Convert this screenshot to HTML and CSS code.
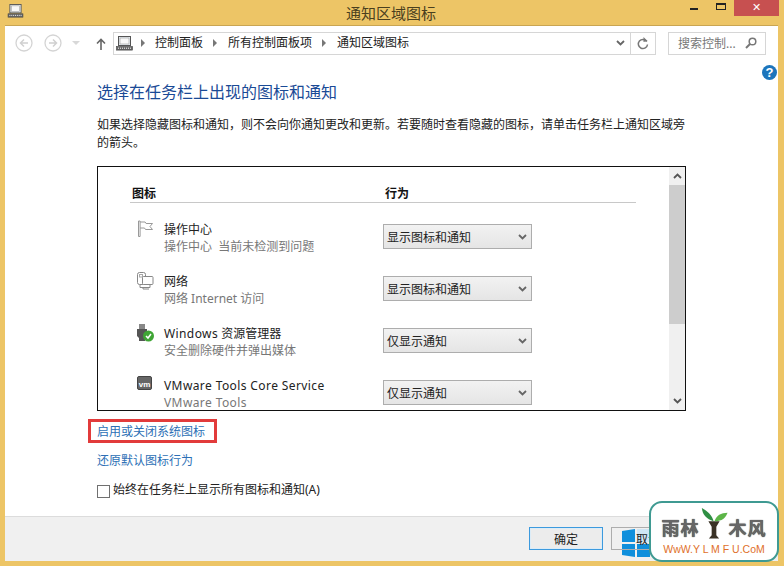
FILE: index.html
```html
<!DOCTYPE html>
<html lang="zh-CN">
<head>
<meta charset="utf-8">
<title>通知区域图标</title>
<link rel="stylesheet" href="styles.css">
</head>
<body>
<svg class="defs" width="0" height="0" aria-hidden="true">
  <symbol id="computer" viewBox="0 0 17 15">
    <rect x="2.5" y="0.5" width="12" height="9" fill="#e8eef2" stroke="#555"/>
    <rect x="4" y="2" width="9" height="6" fill="#f8f8f8" stroke="#999" stroke-width=".6"/>
    <rect x="0.5" y="10.5" width="16" height="3.6" fill="#666" stroke="#444" stroke-width=".6"/>
    <path d="M2 12.2h1M4 12.2h1M6 12.2h1M8 12.2h1M10 12.2h1M12 12.2h1M14 12.2h1" stroke="#fff"/>
  </symbol>
  <symbol id="chev" viewBox="0 0 9 6">
    <path d="M1 1l3.5 3.5L8 1" fill="none" stroke="#666" stroke-width="1.8"/>
  </symbol>
</svg>
<div class="window">
  <header class="titlebar">
    <svg class="title-icon"><use href="#computer"/></svg>
    <h1 class="title">通知区域图标</h1>
    <div class="controls">
      <span class="min"></span>
      <span class="max"></span>
      <span class="close">✕</span>
    </div>
  </header>
  <main class="client">
    <nav class="toolbar">
      <svg class="nav-btn" viewBox="0 0 18 18"><circle cx="9" cy="9" r="8" fill="none" stroke="#d4d4d4" stroke-width="1.3"/><path d="M13 9H6M9 5.5L5.5 9 9 12.5" fill="none" stroke="#d0d0d0" stroke-width="1.5"/></svg>
      <svg class="nav-btn" viewBox="0 0 18 18"><circle cx="9" cy="9" r="8" fill="none" stroke="#d4d4d4" stroke-width="1.3"/><path d="M5 9h7M9 5.5L12.5 9 9 12.5" fill="none" stroke="#d0d0d0" stroke-width="1.5"/></svg>
      <svg class="nav-drop" viewBox="0 0 8 4"><path d="M0 0h8L4 4z" fill="#d8d8d8"/></svg>
      <svg class="nav-up" viewBox="0 0 10 12"><path d="M5 12V1.5M1 5.5l4-4 4 4" fill="none" stroke="#666" stroke-width="1.6"/></svg>
      <div class="address">
        <svg class="addr-icon"><use href="#computer"/></svg>
        <span class="sep"></span><span class="crumb">控制面板</span>
        <span class="sep"></span><span class="crumb">所有控制面板项</span>
        <span class="sep"></span><span class="crumb">通知区域图标</span>
        <svg class="addr-chev"><use href="#chev"/></svg>
        <span class="refresh">
          <svg viewBox="0 0 12 13" width="12" height="13"><path d="M9.8 4.5A4.6 4.6 0 1 0 10.5 7.5" fill="none" stroke="#777" stroke-width="1.5"/><path d="M6.5 0v5l4-1z" fill="#777"/></svg>
        </span>
      </div>
      <div class="search">
        <span>搜索控制...</span>
        <svg viewBox="0 0 12 12" width="12" height="12"><circle cx="7.5" cy="4.5" r="3.3" fill="none" stroke="#777" stroke-width="1.5"/><path d="M5 7l-4 4" stroke="#777" stroke-width="2"/></svg>
      </div>
    </nav>
    <svg class="help" viewBox="0 0 15 15"><circle cx="7.5" cy="7.5" r="7.5" fill="#1c75bc"/><text x="7.5" y="12" text-anchor="middle" class="help-mark">?</text></svg>
    <section class="content">
      <h2 class="heading">选择在任务栏上出现的图标和通知</h2>
      <p class="desc">如果选择隐藏图标和通知，则不会向你通知更改和更新。若要随时查看隐藏的图标，请单击任务栏上通知区域旁的箭头。</p>
      <div class="listbox">
        <div class="list-inner">
          <div class="list-head"><span class="col-a">图标</span><span>行为</span></div>
          <div class="row">
            <svg class="row-icon" viewBox="0 0 18 18"><path d="M1.500 16.500V1h1.600v15.500zM3.100 2h5l1 1.500h6.400l-2.500 3 2.500 3h-7l-1-1.500h-4.400" fill="#fff" stroke="#999"/></svg>
            <div class="row-text"><div class="name">操作中心</div><div class="sub">操作中心&nbsp; 当前未检测到问题</div></div>
            <div class="select"><span>显示图标和通知</span><svg class="sel-chev"><use href="#chev"/></svg></div>
          </div>
          <div class="row">
            <svg class="row-icon" viewBox="0 0 18 18"><rect x="0.500" y="0.500" width="8" height="12" rx="2" fill="#fff" stroke="#888"/><rect x="2.500" y="2.500" width="3" height="2.500" fill="#fff" stroke="#aaa"/><rect x="5.500" y="4.500" width="10.500" height="8" rx="1" fill="#fff" stroke="#888"/><path d="M3 12.500v3h10v-3M6 15.500v1.500h6" fill="none" stroke="#888"/></svg>
            <div class="row-text"><div class="name">网络</div><div class="sub">网络 Internet 访问</div></div>
            <div class="select"><span>显示图标和通知</span><svg class="sel-chev"><use href="#chev"/></svg></div>
          </div>
          <div class="row">
            <svg class="row-icon" viewBox="0 0 18 18"><rect x="2" y="0" width="6" height="5" fill="#888"/><path d="M0 5h10v7l-2 2v3H2v-3l-2-2z" fill="#555"/><circle cx="11.500" cy="12" r="5.500" fill="#3fa535"/><path d="M9 12l2 2 3-4" fill="none" stroke="#fff" stroke-width="1.500"/></svg>
            <div class="row-text"><div class="name"><span class="latin">Windows</span> 资源管理器</div><div class="sub">安全删除硬件并弹出媒体</div></div>
            <div class="select"><span>仅显示通知</span><svg class="sel-chev"><use href="#chev"/></svg></div>
          </div>
          <div class="row">
            <svg class="row-icon" viewBox="0 0 18 18"><rect x="0.500" y="0.500" width="14" height="13" rx="1.500" fill="#666" stroke="#444"/><text x="7.500" y="10.500" text-anchor="middle" class="vm-mark">vm</text></svg>
            <div class="row-text"><div class="name"><span class="latin">VMware Tools Core Service</span></div><div class="sub"><span class="latin">VMware Tools</span></div></div>
            <div class="select"><span>仅显示通知</span><svg class="sel-chev"><use href="#chev"/></svg></div>
          </div>
        </div>
        <div class="scrollbar">
          <svg class="sb-arrow" viewBox="0 0 9 6"><path d="M1 5l3.500-3.500L8 5" fill="none" stroke="#555" stroke-width="1.800"/></svg>
          <div class="sb-thumb"></div>
          <div class="sb-track"></div>
          <svg class="sb-arrow" viewBox="0 0 9 6"><path d="M1 1l3.500 3.500L8 1" fill="none" stroke="#555" stroke-width="1.800"/></svg>
        </div>
      </div>
      <div class="link-wrap"><a class="link">启用或关闭系统图标</a><span class="highlight"></span></div>
      <a class="link link-second">还原默认图标行为</a>
      <label class="check"><span class="box"></span>始终在任务栏上显示所有图标和通知(A)</label>
    </section>
    <footer class="footer">
      <button class="btn btn-default">确定</button>
      <button class="btn btn-over">取消</button>
    </footer>
  </main>
  <svg class="winlogo" viewBox="0 0 28 28"><path d="M0 2l13-2v13H0zM0 15h13v13l-13-2z" fill="#0f8fdc"/><path d="M15 0h13v13H15z" fill="#cfe6f5"/><path d="M15 15h13v13H15z" fill="#0f8fdc"/></svg>
  <aside class="badge">
    <div class="badge-top">
      <span class="badge-cn">雨林</span>
      <svg class="badge-tree" viewBox="0 0 30 33"><path d="M9 14h12l-3.500 6v9l3 3.500H9.500l3-3.500v-9z" fill="#3a3226"/><path d="M14.500 14C13 8 8 3 2 0c.5 7 5 12 12.500 14z" fill="#2f8f43"/><path d="M15.500 14c2-6 7-9 14-9-2 6-7 9.500-14 9z" fill="#5cb548"/></svg>
      <span class="badge-cn">木风</span>
    </div>
    <div class="badge-url">WwW.Y L M F U.CoM</div>
  </aside>
</div>
</body>
</html>
```
FILE: styles.css
```css
* { box-sizing: border-box; }
html, body { margin: 0; padding: 0; }
body {
  width: 784px;
  height: 566px;
  overflow: hidden;
  font-family: "Noto Sans", "Noto Sans CJK SC", sans-serif;
  font-size: 12px;
  color: #222;
}
.defs { position: absolute; }
.window {
  position: relative;
  width: 784px;
  height: 566px;
  background: #edc566;
  padding: 0 6px 5px 5px;
  display: flex;
  flex-direction: column;
}
.titlebar {
  position: relative;
  height: 25px;
  flex: none;
  display: flex;
  align-items: center;
  justify-content: center;
}
.title-icon {
  position: absolute;
  left: 2px;
  top: 4px;
  width: 17px;
  height: 14px;
}
.title {
  margin: 0 0 0 -1px;
  font-size: 15px;
  font-weight: 400;
  line-height: 20px;
  padding-top: 1px;
  color: #4a3f1e;
}
.controls {
  position: absolute;
  right: -1px;
  top: 0;
  display: flex;
}
.min {
  width: 8px;
  height: 2px;
  background: #222;
  margin: 8px 18px 0 0;
}
.max {
  width: 10px;
  height: 7px;
  border: 1px solid #222;
  border-top-width: 2px;
  margin: 3px 8px 0 0;
}
.close {
  width: 45px;
  height: 16px;
  background: #c75050;
  color: #fff;
  font-size: 11px;
  line-height: 14px;
  text-align: center;
}
.client {
  position: relative;
  flex: 1;
  min-height: 0;
  background: #fff;
  border-top: 1px solid #c9a552;
  display: flex;
  flex-direction: column;
}
.toolbar {
  display: flex;
  align-items: center;
  height: 22px;
  margin-top: 6px;
  padding-left: 10px;
  flex: none;
}
.nav-btn { width: 18px; height: 18px; margin-right: 11px; flex: none; }
.nav-drop { width: 8px; height: 4px; margin-left: -1px; margin-right: 16px; flex: none; }
.nav-up { width: 10px; height: 12px; margin-right: 7px; margin-top: 2px; flex: none; }
.address {
  width: 543px;
  height: 23px;
  border: 1px solid #d6d6d6;
  display: flex;
  align-items: center;
  padding-left: 2px;
  flex: none;
}
.addr-icon { width: 17px; height: 15px; flex: none; }
.sep {
  width: 0;
  height: 0;
  border-left: 4px solid #777;
  border-top: 4px solid transparent;
  border-bottom: 4px solid transparent;
  margin: 0 11px 0 10px;
  flex: none;
}
.addr-icon + .sep { margin: 0 10px 0 8px; }
.crumb { white-space: nowrap; line-height: 20px; color: #222; }
.addr-chev { width: 9px; height: 6px; margin-left: auto; margin-right: 5px; flex: none; }
.refresh {
  width: 25px;
  height: 21px;
  border-left: 1px solid #d6d6d6;
  display: flex;
  align-items: center;
  justify-content: center;
  flex: none;
}
.search {
  width: 98px;
  height: 23px;
  margin-left: 12px;
  border: 1px solid #d6d6d6;
  display: flex;
  align-items: center;
  justify-content: space-between;
  padding: 0 8px 0 9px;
  color: #777;
  flex: none;
}
.help {
  position: absolute;
  right: 1px;
  top: 39px;
  width: 15px;
  height: 15px;
}
.help-mark { font-size: 13px; font-weight: 700; fill: #fff; font-family: "Liberation Sans", sans-serif; }
.content {
  flex: 1;
  min-height: 0;
  padding: 0 0 0 92px;
  display: flex;
  flex-direction: column;
  align-items: flex-start;
}
.heading {
  margin: 27px 0 0;
  font-size: 16px;
  line-height: 22px;
  font-weight: 400;
  color: #1a4a96;
}
.desc {
  margin: 13px 0 0;
  width: 592px;
  line-height: 18px;
  color: #222;
}
.listbox {
  width: 589px;
  height: 245px;
  margin-top: 14px;
  border: 1.500px solid #111;
  display: flex;
  overflow: hidden;
  flex: none;
}
.list-inner {
  flex: 1;
  min-width: 0;
  padding: 17px 33px 0 32px;
  overflow: hidden;
}
.list-head {
  display: flex;
  height: 19px;
  border-bottom: 1px solid #c8c8c8;
  padding: 1px 0 0 2px;
  font-weight: 700;
  line-height: 18px;
  color: #111;
}
.col-a { width: 253px; }
.row {
  display: flex;
  height: 52px;
  padding-top: 21px;
}
.row-icon { width: 18px; height: 18px; margin-left: 7px; margin-top: -4px; flex: none; }
.row-text { width: 219px; margin-left: 9px; margin-top: -3px; flex: none; }
.name { line-height: 17px; color: #222; white-space: nowrap; }
.sub { line-height: 17px; color: #777; white-space: nowrap; }
.latin { letter-spacing: .4px; }
.select {
  width: 149px;
  height: 25px;
  border: 1px solid #adadad;
  background: linear-gradient(#f2f2f2, #e5e5e5);
  display: flex;
  align-items: center;
  justify-content: space-between;
  padding: 0 4px 0 3px;
  color: #222;
  flex: none;
}
.sel-chev { width: 9px; height: 6px; flex: none; }
.scrollbar {
  width: 16px;
  background: #f0f0f0;
  display: flex;
  flex-direction: column;
  align-items: center;
  flex: none;
}
.sb-arrow { width: 9px; height: 6px; margin: 6px 0; flex: none; }
.sb-thumb { width: 16px; height: 139px; background: #cdcdcd; flex: none; }
.sb-track { flex: 1; }
.link {
  color: #2c6fb5;
  line-height: 18px;
  white-space: nowrap;
}
.link-wrap {
  position: relative;
  margin-top: 12px;
}
.highlight {
  position: absolute;
  left: -9px;
  right: -12px;
  top: -4px;
  bottom: -2px;
  border: 3px solid #e23b3b;
}
.link-wrap .link { display: block; }
.link-second { margin-top: 11px; }
.check {
  display: flex;
  align-items: center;
  margin-top: 11px;
  color: #222;
  line-height: 18px;
}
.box {
  width: 13px;
  height: 13px;
  border: 1px solid #707070;
  background: #fff;
  margin-right: 3px;
  margin-top: 2px;
  flex: none;
}
.footer {
  height: 45px;
  background: #f0f0f0;
  border-top: 1px solid #dcdcdc;
  display: flex;
  justify-content: flex-end;
  align-items: flex-start;
  padding: 10px 93px 0 0;
  gap: 8px;
  flex: none;
}
.btn {
  width: 74px;
  height: 23px;
  padding: 0;
  border: 1px solid #adadad;
  background: #ececec;
  font: inherit;
  color: #222;
}
.btn-default {
  border-color: #3c9ade;
  box-shadow: inset 0 0 0 1px #dcecf7;
}
.btn-over {
  position: relative;
  z-index: 2;
  background: transparent;
}
.winlogo {
  position: absolute;
  z-index: 1;
  left: 622px;
  top: 529px;
  width: 28px;
  height: 28px;
}
.badge {
  position: absolute;
  z-index: 3;
  left: 649px;
  top: 501px;
  width: 130px;
  height: 61px;
  border: 2px solid #3f9a92;
  border-radius: 13px;
  background: #fff;
  display: flex;
  flex-direction: column;
  align-items: center;
  overflow: hidden;
}
.badge-top {
  display: flex;
  align-items: flex-end;
  height: 34px;
  margin-top: 2px;
}
.badge-cn {
  font-size: 18px;
  font-weight: 700;
  line-height: 22px;
  letter-spacing: 1px;
  color: #666;
  text-shadow: 0 0 1px #222;
}
.badge-tree { width: 28px; height: 31px; margin: 0 1px 0 0; }
.badge-url {
  font-family: "Liberation Sans", sans-serif;
  font-size: 10.500px;
  line-height: 14px;
  margin-top: 3px;
  color: #e0702a;
  white-space: nowrap;
}
.vm-mark { font-size: 8px; font-weight: 700; fill: #fff; font-family: "Liberation Sans", sans-serif; }
```
